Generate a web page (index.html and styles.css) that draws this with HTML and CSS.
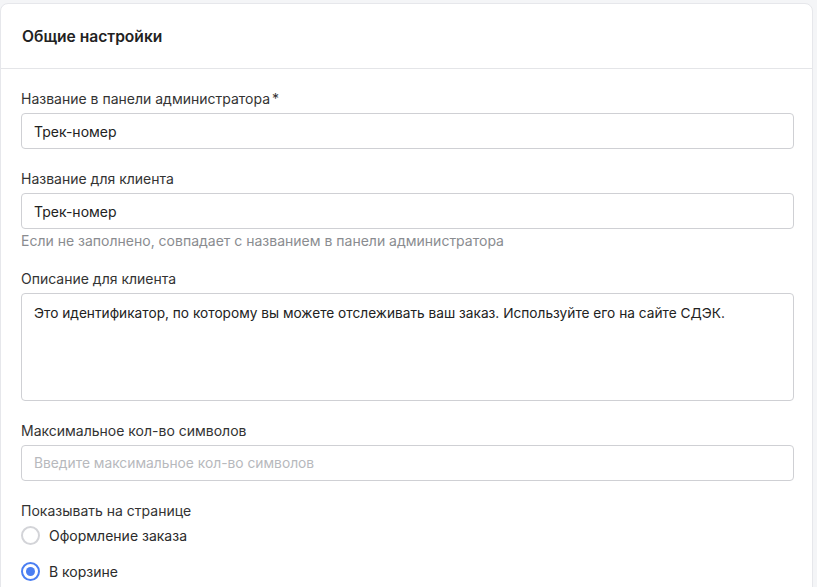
FILE: index.html
```html
<!DOCTYPE html>
<html lang="ru">
<head>
<meta charset="utf-8">
<link rel="stylesheet" href="styles.css">
</head>
<body>
<div class="card">
  <div class="card-header">Общие настройки</div>
  <div class="card-body">
    <div class="field">
      <div class="label">Название в панели администратора<span class="req">*</span></div>
      <div class="input">Трек-номер</div>
    </div>
    <div class="field">
      <div class="label">Название для клиента</div>
      <div class="input">Трек-номер</div>
      <div class="hint">Если не заполнено, совпадает с названием в панели администратора</div>
    </div>
    <div class="field">
      <div class="label">Описание для клиента</div>
      <div class="textarea">Это идентификатор, по которому вы можете отслеживать ваш заказ. Используйте его на сайте СДЭК.</div>
    </div>
    <div class="field">
      <div class="label">Максимальное кол-во символов</div>
      <div class="input placeholder">Введите максимальное кол-во символов</div>
    </div>
    <div class="field">
      <div class="label">Показывать на странице</div>
      <div class="radios">
        <div class="radio"><span class="circle"></span>Оформление заказа</div>
        <div class="radio"><span class="circle checked"></span>В корзине</div>
      </div>
    </div>
  </div>
</div>
</body>
</html>
```
FILE: styles.css
```css
* { box-sizing: border-box; }
body {
  margin: 0;
  background: #f4f5f7;
  font-family: Inter, "Noto Sans", sans-serif;
  color: #2b2b2b;
}
.card {
  margin-top: 3px;
  width: 813px;
  background: #fff;
  border: 1px solid #e6e7eb;
  border-radius: 8px;
  min-height: 600px;
}
.card-header {
  height: 65px;
  display: flex;
  align-items: center;
  padding-left: 21px;
  font-size: 15.6px;
  font-weight: 600;
  color: #222;
  border-bottom: 1px solid #e4e5e8;
}
.card-body {
  padding: 20px 18px 0 20px;
  display: flex;
  flex-direction: column;
  gap: 20px;
}
.field { display: flex; flex-direction: column; }
.label {
  font-size: 14px;
  line-height: 20px;
  color: #333;
  margin-bottom: 4px;
}
.req { margin-left: 2px; }
.input, .textarea {
  border: 1px solid #cfd0d4;
  border-radius: 4px;
  font-size: 14px;
  color: #222;
}
.input {
  height: 36px;
  display: flex;
  align-items: center;
  padding-left: 12px;
}
.input.placeholder { color: #b7b9bd; font-size: 13.8px; }
.textarea {
  height: 108px;
  padding: 9px 12px;
  line-height: 20px;
  font-size: 13.7px;
}
.hint {
  margin-top: 4px;
  font-size: 14px;
  line-height: 16px;
  color: #8a8c90;
}
.radios {
  display: flex;
  flex-direction: column;
  gap: 12px;
  margin-top: -2px;
}
.radio {
  display: flex;
  align-items: center;
  height: 24px;
  font-size: 14px;
  color: #2b2b2b;
}
.circle {
  width: 19px;
  height: 19px;
  border-radius: 50%;
  border: 2px solid #d3d4d8;
  margin-right: 9px;
  display: flex;
  align-items: center;
  justify-content: center;
}
.circle.checked { border-color: #4a7ef2; }
.circle.checked::after {
  content: "";
  width: 9px;
  height: 9px;
  border-radius: 50%;
  background: #4a7ef2;
}
```
